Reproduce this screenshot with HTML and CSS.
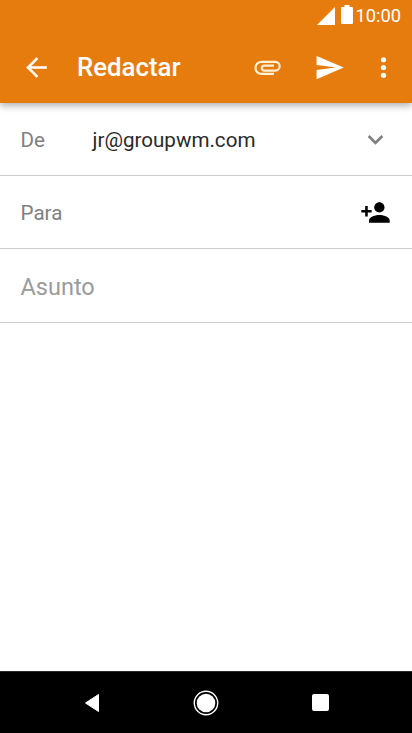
FILE: index.html
```
<!DOCTYPE html>
<html lang="es">
<head>
  <meta charset="UTF-8">
  <meta name="viewport" content="width=device-width, initial-scale=1">
  <title>Redactar</title>
  <link rel="stylesheet" href="styles.css">
</head>
<body>
  <header class="header">
    <div class="status-bar">
      <svg class="signal" viewBox="0 0 18 18"><path d="M18 0v18H0z"/></svg>
      <svg class="battery" viewBox="0 0 12 19"><path d="M3.500 0h5v2H11a1 1 0 0 1 1 1v15a1 1 0 0 1-1 1H1a1 1 0 0 1-1-1V3a1 1 0 0 1 1-1h2.500z"/></svg>
      <span class="time">10:00</span>
    </div>
    <div class="toolbar">
      <svg class="icon" viewBox="0 0 24 24"><path d="M20 11H7.830l5.590-5.590L12 4l-8 8 8 8 1.410-1.410L7.830 13H20v-2z"/></svg>
      <h1 class="title">Redactar</h1>
      <svg class="icon attach" viewBox="0 0 24 24"><path d="M17 17H7.400a4.700 4.700 0 0 1 0-9.400H18a3.400 3.400 0 0 1 0 6.800H9.500a1.900 1.900 0 0 1 0-3.800H17"/></svg>
      <svg class="icon send" viewBox="0 0 24 24"><path d="M2.010 21L23 12 2.010 3 2 10l15 2-15 2z"/></svg>
      <svg class="icon more" viewBox="0 0 24 24"><circle cx="12" cy="6" r="2"/><circle cx="12" cy="12" r="2"/><circle cx="12" cy="18" r="2"/></svg>
    </div>
  </header>

  <main class="compose">
    <div class="row">
      <span class="label">De</span>
      <span class="address">jr@groupwm.com</span>
      <svg class="icon expand" viewBox="0 0 24 24"><path d="M16.590 8.590L12 13.170 7.410 8.590 6 10l6 6 6-6z"/></svg>
    </div>
    <div class="row">
      <span class="label">Para</span>
      <svg class="icon add-person" viewBox="0 0 24 24"><path d="M15 12c2.210 0 4-1.790 4-4s-1.790-4-4-4-4 1.790-4 4 1.790 4 4 4zm-9-2V7H4v3H1v2h3v3h2v-3h3v-2H6zm9 4c-2.670 0-8 1.340-8 4v2h16v-2c0-2.660-5.330-4-8-4z"/></svg>
    </div>
    <div class="row row-subject">
      <span class="subject">Asunto</span>
    </div>
  </main>

  <nav class="nav-bar">
    <svg class="nav-back" viewBox="0 0 16 20"><path d="M14.500 1.500v17L1.500 10z"/></svg>
    <svg class="nav-home" viewBox="0 0 26 26"><circle class="ring" cx="13" cy="13" r="11.700"/><circle cx="13" cy="13" r="9.300"/></svg>
    <span class="nav-recent"></span>
  </nav>
</body>
</html>
```

FILE: styles.css
```
* {
  box-sizing: border-box;
  margin: 0;
  padding: 0;
}

body {
  height: 733px;
  display: flex;
  flex-direction: column;
  background-color: #fff;
  font-family: Roboto, sans-serif;
  overflow: hidden;
}

svg {
  display: block;
  flex-shrink: 0;
}

.header {
  height: 103px;
  background-color: #e67c0e;
  color: #fff;
  fill: #fff;
  box-shadow: 0 3px 7px rgba(0, 0, 0, 0.3);
}

.status-bar {
  height: 31px;
  display: flex;
  justify-content: flex-end;
  align-items: center;
  padding-right: 11px;
}

.signal {
  width: 18px;
  height: 18px;
  margin-right: 6px;
}

.battery {
  width: 12px;
  height: 19px;
  margin-right: 2px;
  margin-top: -2px;
}

.time {
  font-size: 18.3px;
  line-height: 20px;
  margin-top: 1px;
}

.toolbar {
  height: 72px;
  display: flex;
  align-items: center;
  padding: 0 13px 0 20.5px;
}

.icon {
  width: 31px;
  height: 31px;
}

.title {
  font-size: 25.8px;
  font-weight: 500;
  line-height: 30px;
  margin-left: 25.5px;
  margin-right: auto;
}

.attach {
  fill: none;
  stroke: #fff0d8;
  stroke-width: 1.7;
}

.send {
  margin-left: 31px;
}

.more {
  margin-left: 23px;
}

.compose {
  flex: 1;
}

.row {
  height: 73px;
  display: flex;
  align-items: center;
  padding: 0 21px 0 20.5px;
  border-bottom: 1px solid #ccc;
  font-size: 20.6px;
}

.row-subject {
  height: 74px;
}

.label {
  width: 72px;
  padding-top: 2px;
  color: #808080;
}

.address {
  padding-top: 2px;
  color: #2a2a2a;
}

.expand {
  fill: #808080;
  margin-left: auto;
}

.add-person {
  margin-left: auto;
}

.subject {
  padding-top: 3px;
  font-size: 23.5px;
  color: #9b9b9b;
}

.nav-bar {
  height: 62px;
  display: flex;
  align-items: center;
  justify-content: space-between;
  padding: 0 83px 0 84px;
  background-color: #000;
  border-top: 1px solid #2a2a2a;
  fill: #fff;
}

.nav-back {
  width: 16px;
  height: 20px;
  stroke: #fff;
  stroke-width: 1;
  stroke-linejoin: round;
}

.nav-home {
  width: 26px;
  height: 26px;
  margin-right: 1px;
}

.ring {
  fill: none;
  stroke: #fff;
  stroke-width: 1.4;
}

.nav-recent {
  width: 17px;
  height: 17px;
  border-radius: 2px;
  background-color: #fff;
}
```
